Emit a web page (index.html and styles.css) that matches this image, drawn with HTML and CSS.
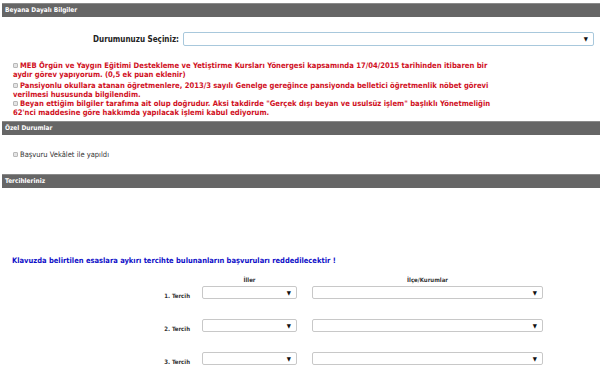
FILE: index.html
```html
<!DOCTYPE html>
<html lang="tr">
<head>
    <meta charset="UTF-8">
    <title>Başvuru</title>
    <link rel="stylesheet" href="styles.css">
</head>
<body>
    <div class="bar">Beyana Dayalı Bilgiler</div>

    <div class="status-row">
        <label class="status-label">Durumunuzu Seçiniz:</label>
        <div class="select select-wide"><span class="arrow">▼</span></div>
    </div>

    <div class="pledges">
        <p class="pledge"><span class="check"></span>MEB Örgün ve Yaygın Eğitimi Destekleme ve Yetiştirme Kursları Yönergesi kapsamında 17/04/2015 tarihinden itibaren bir aydır görev yapıyorum. (0,5 ek puan eklenir)</p>
        <p class="pledge"><span class="check"></span>Pansiyonlu okullara atanan öğretmenlere, 2013/3 sayılı Genelge gereğince pansiyonda belletici öğretmenlik nöbet görevi verilmesi hususunda bilgilendim.</p>
        <p class="pledge"><span class="check"></span>Beyan ettiğim bilgiler tarafıma ait olup doğrudur. Aksi takdirde "Gerçek dışı beyan ve usulsüz işlem" başlıklı Yönetmeliğin 62'nci maddesine göre hakkımda yapılacak işlemi kabul ediyorum.</p>
    </div>

    <div class="bar">Özel Durumlar</div>
    <p class="proxy"><span class="check"></span>Başvuru Vekâlet ile yapıldı</p>

    <div class="bar">Tercihleriniz</div>

    <p class="warning">Klavuzda belirtilen esaslara aykırı tercihte bulunanların başvuruları reddedilecektir !</p>

    <div class="prefs prefs-head">
        <div></div>
        <div class="col-head">İller</div>
        <div class="col-head">İlçe/Kurumlar</div>
    </div>

    <div class="prefs">
        <div class="pref-label">1. Tercih</div>
        <div class="select select-city"><span class="arrow">▼</span></div>
        <div class="select select-inst"><span class="arrow">▼</span></div>

        <div class="pref-label">2. Tercih</div>
        <div class="select select-city"><span class="arrow">▼</span></div>
        <div class="select select-inst"><span class="arrow">▼</span></div>

        <div class="pref-label">3. Tercih</div>
        <div class="select select-city"><span class="arrow">▼</span></div>
        <div class="select select-inst"><span class="arrow">▼</span></div>
    </div>
</body>
</html>
```

FILE: styles.css
```css
body {
    margin: 0;
    padding: 3px 0 0 2px;
    background: #fff;
    font-family: "DejaVu Sans Condensed", "DejaVu Sans", sans-serif;
    color: #333;
}

p {
    margin: 0;
}

.bar {
    background: #666;
    border-top: 1px solid #8a8a8a;
    color: #fff;
    font-size: 6.5px;
    font-weight: bold;
    height: 13px;
    line-height: 13px;
    padding-left: 3px;
}

.status-row {
    display: flex;
    align-items: center;
    margin-top: 15px;
}

.status-label {
    width: 177px;
    text-align: right;
    font-size: 8px;
    font-weight: bold;
    color: #222;
    padding-right: 4px;
}

.select {
    position: relative;
    box-sizing: border-box;
    height: 13px;
    border: 1px solid #c8c8c8;
    border-radius: 2px;
    background: #fff;
}

.select-wide {
    width: 411px;
    height: 14px;
    border-color: #a8c8dc;
}

.arrow {
    position: absolute;
    right: 5px;
    top: 2px;
    font-size: 6px;
    line-height: 7px;
    color: #111;
}

.pledges {
    margin-top: 15px;
    padding-left: 11px;
}

.pledge {
    color: #d0101e;
    font-size: 7.6px;
    font-weight: bold;
    line-height: 9px;
    width: 482px;
}

.pledge:first-child {
    margin-bottom: 2px;
}

.check {
    display: inline-block;
    box-sizing: border-box;
    width: 5px;
    height: 5px;
    border: 1px solid #b8b8b8;
    background: #e4e4e4;
    border-radius: 1px;
    margin-right: 2px;
    vertical-align: 0;
}

.pledges + .bar {
    margin-top: 4px;
}

.proxy {
    font-size: 7.5px;
    padding: 15px 0 15px 11px;
    line-height: 9px;
}

.warning {
    margin-top: 68px;
    padding-left: 10px;
    color: #1010c8;
    font-size: 7.5px;
    font-weight: bold;
    line-height: 9px;
}

.prefs {
    display: grid;
    grid-template-columns: 200px 110px 231px;
    row-gap: 20px;
    align-items: center;
}

.prefs-head {
    margin-top: 11px;
    margin-bottom: 2px;
    height: 8px;
}

.col-head {
    font-size: 6px;
    font-weight: bold;
    line-height: 8px;
    color: #333;
    text-align: center;
}

.col-head:nth-child(2) {
    width: 95px;
}

.pref-label {
    font-size: 6px;
    font-weight: bold;
    color: #333;
    text-align: right;
    padding-right: 12px;
    padding-top: 6px;
}

.select-city {
    width: 95px;
}

.select-inst {
    width: 231px;
}
```
